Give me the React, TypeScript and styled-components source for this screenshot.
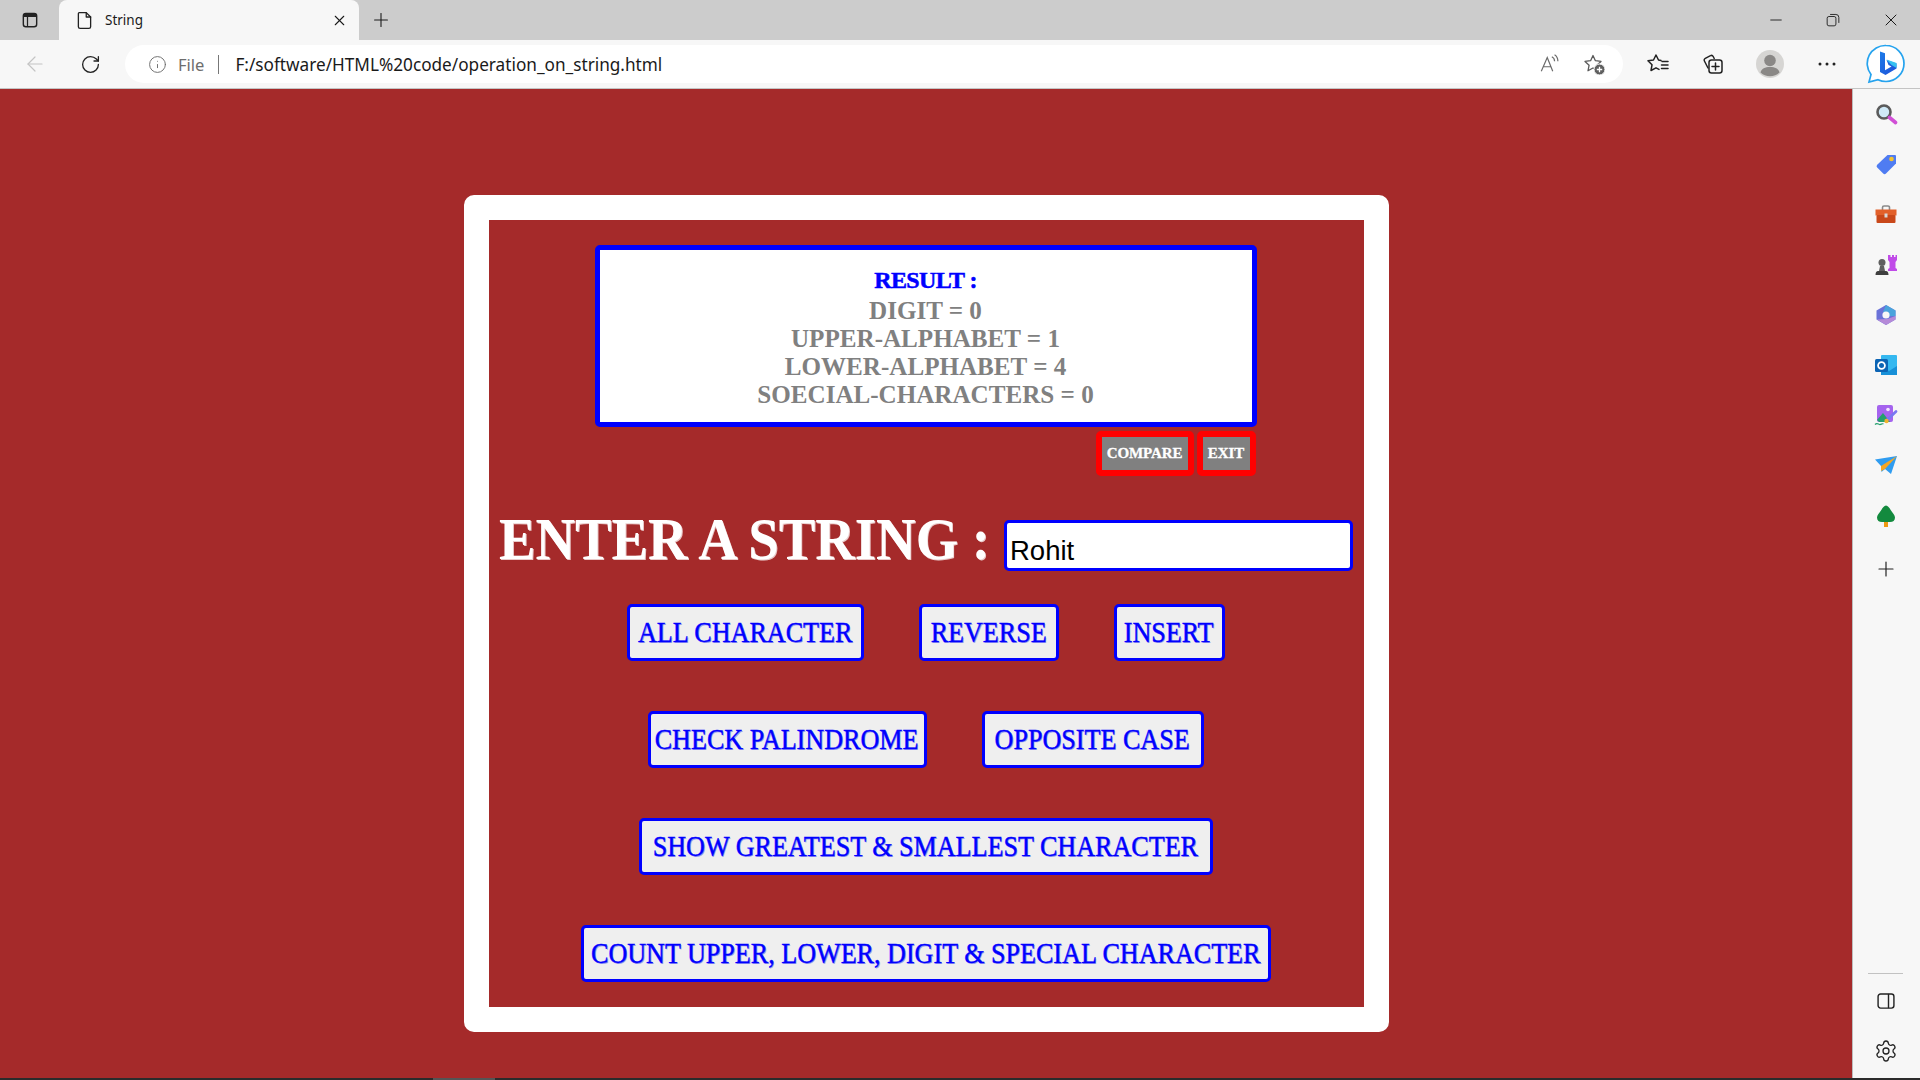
import React from "react";
import styled, { createGlobalStyle } from "styled-components";
import { ArrowLeft, Info, Minus, Plus, RotateCw, Settings, X } from "lucide-react";

const GlobalStyle = createGlobalStyle`
  html, body { margin: 0; padding: 0; overflow: hidden; }
  body { font-family: "Noto Sans", "Liberation Sans", sans-serif; }
`;

const Window = styled.div`
  width: 1920px;
  height: 1080px;
  display: flex;
  flex-direction: column;
  background: #a52a2a;
`;

/* browser chrome */
const TabStrip = styled.div`
  height: 40px;
  flex: none;
  background: #cccccc;
  display: flex;
  align-items: center;
  color: #1a1a1a;
`;
const SideToggle = styled.div`
  width: 59px;
  flex: none;
  display: flex;
  justify-content: center;
  svg { margin-left: 1px; }
`;
const Tab = styled.div`
  width: 300px;
  height: 40px;
  flex: none;
  box-sizing: border-box;
  background: #f7f7f7;
  border-radius: 8px 8px 0 0;
  display: flex;
  align-items: center;
  padding: 0 11px 0 15px;
  font-size: 13.5px;
`;
const TabTitle = styled.span`
  margin-left: 10px;
  flex: 1;
`;
const NewTab = styled.div`
  width: 44px;
  flex: none;
  display: flex;
  justify-content: center;
`;
const WindowControls = styled.div`
  margin-left: auto;
  display: flex;
  align-items: center;
  gap: 41px;
  padding-right: 19px;
  svg { display: block; }
`;
const Toolbar = styled.div`
  height: 48px;
  flex: none;
  background: #f7f7f7;
  border-bottom: 1px solid #c4c4c4;
  display: flex;
  align-items: center;
`;
const NavButton = styled.div<{ $width: number }>`
  width: ${(p) => p.$width}px;
  flex: none;
  display: flex;
  justify-content: center;
`;
const AddressBar = styled.div`
  width: 1498px;
  height: 38px;
  margin-left: 14px;
  box-sizing: border-box;
  flex: none;
  background: #ffffff;
  border-radius: 19px;
  display: flex;
  align-items: center;
  padding: 0 23px 0 23px;
  color: #1a1a1a;
`;
const Scheme = styled.span`
  color: #6d6d6d;
  font-size: 16.5px;
  margin-left: 11px;
`;
const Separator = styled.span`
  width: 1px;
  height: 19px;
  background: #777777;
  margin: 0 16px 0 14px;
`;
const Url = styled.span`
  font-size: 17.2px;
  flex: 1;
  white-space: nowrap;
`;
const BarIcons = styled.div`
  display: flex;
  align-items: center;
  gap: 21px;
  margin-right: -6px;
`;
const ToolIcons = styled.div`
  flex: 1;
  display: flex;
  align-items: center;
  padding-left: 23px;
  svg { display: block; flex: none; }
`;
const ToolSlot = styled.div<{ $width: number }>`
  width: ${(p) => p.$width}px;
  flex: none;
  display: flex;
  justify-content: center;
`;

const Body = styled.div`
  flex: 1;
  min-height: 0;
  display: flex;
`;
const Page = styled.div`
  flex: 1;
  min-width: 0;
  background: #a52a2a;
  padding: 106px 0 0 1px;
  display: flex;
  justify-content: center;
  align-items: flex-start;
`;
const SidePanel = styled.div`
  width: 68px;
  flex: none;
  box-sizing: border-box;
  background: #f7f7f7;
  border-left: 1px solid #bdbdbd;
  padding-right: 2px;
  display: flex;
  flex-direction: column;
  align-items: center;
  padding-top: 13px;
  svg { display: block; }
`;
const SideIcons = styled.div`
  display: flex;
  flex-direction: column;
  align-items: center;
  gap: 26.2px;
`;
const SideAdd = styled.div`
  margin-top: 3px;
`;
const SideFoot = styled.div`
  margin-top: auto;
  padding-bottom: 15px;
  display: flex;
  flex-direction: column;
  align-items: center;
  gap: 28px;
`;
const SideRule = styled.div`
  width: 35px;
  height: 1px;
  background: #c2c2c2;
  margin-bottom: -11px;
`;
const Taskbar = styled.div`
  height: 2px;
  flex: none;
  background: #2b2b2b;
  padding-left: 433px;
`;
const TaskbarItem = styled.div`
  width: 62px;
  height: 2px;
  background: #555555;
`;

/* page content */
const Card = styled.div`
  width: 925px;
  height: 837px;
  box-sizing: border-box;
  border: 25px solid #ffffff;
  border-radius: 10px;
  background: #a52a2a;
  padding: 25px 2px 0 0;
  display: flex;
  flex-direction: column;
  align-items: center;
`;
const ResultBox = styled.div`
  width: 662px;
  height: 182px;
  flex: none;
  box-sizing: border-box;
  border: 5.5px solid #0000ff;
  border-radius: 5px;
  background: #ffffff;
  padding-top: 16px;
  text-align: center;
  font-family: "Liberation Serif", "Times New Roman", serif;
  font-weight: 700;
  font-size: 25.1px;
  line-height: 28px;
  color: #808080;
`;
const ResultTitle = styled.div`
  color: #0000ff;
  font-size: 24px;
  line-height: 28px;
  margin-bottom: 3px;
  letter-spacing: -0.6px;
  -webkit-text-stroke: 0.5px #0000ff;
`;
const SmallRow = styled.div`
  width: 662px;
  flex: none;
  display: flex;
  justify-content: flex-end;
  gap: 3px;
  margin-top: 4px;
  padding-right: 1px;
  box-sizing: border-box;
`;
const SmallButton = styled.button<{ $width: number }>`
  width: ${(p) => p.$width}px;
  height: 45px;
  box-sizing: border-box;
  padding: 0;
  border: 6px solid #ff0000;
  border-radius: 5px;
  background: #808080;
  color: #ffffff;
  font-family: "Liberation Serif", serif;
  font-weight: 700;
  font-size: 15px;
  letter-spacing: -0.1px;
  -webkit-text-stroke: 0.3px #ffffff;
`;
const InputRow = styled.div`
  width: 100%;
  height: 51px;
  flex: none;
  box-sizing: border-box;
  margin-top: 44px;
  padding-left: 10px;
  display: flex;
  align-items: center;
`;
const Heading = styled.label`
  width: 505px;
  flex: none;
  margin-top: -12px;
  font-family: "Liberation Serif", serif;
  font-weight: 700;
  font-size: 60px;
  line-height: 51px;
  color: #ffffff;
  white-space: nowrap;
  text-shadow: 1px 1px 0 #e9c9c9;
  span {
    display: inline-block;
    transform: scaleX(0.912);
    transform-origin: left center;
  }
`;
const StringInput = styled.input`
  width: 349px;
  height: 51px;
  box-sizing: border-box;
  border: 3px solid #0000ff;
  border-radius: 5px;
  background: #ffffff;
  padding: 11px 0 0 3px;
  font-family: "Liberation Sans", Arial, sans-serif;
  font-size: 27.5px;
  color: #000000;
  outline: none;
`;
const ButtonRow = styled.div<{ $first?: boolean }>`
  height: 57px;
  flex: none;
  display: flex;
  justify-content: center;
  gap: 55px;
  margin-top: ${(p) => (p.$first ? 33 : 50)}px;
`;
const ActionButton = styled.button<{ $width: number }>`
  width: ${(p) => p.$width}px;
  height: 57px;
  box-sizing: border-box;
  padding: 0 0 2px;
  border: 3px solid #0000ff;
  border-radius: 5px;
  background: #efefef;
  color: #0000ff;
  font-family: "Liberation Serif", serif;
  font-weight: 400;
  font-size: 30px;
  display: flex;
  align-items: center;
  justify-content: center;
  white-space: nowrap;
  span {
    display: inline-block;
    transform: scaleX(0.87);
    text-shadow: 1px 1px 0 #9a9af0;
    -webkit-text-stroke: 0.4px #0000ff;
  }
`;

/* icons */
const Glyph: React.FC<{ size?: number; children: React.ReactNode }> = ({ size = 24, children }) => (
  <svg width={size} height={size} viewBox="0 0 24 24" fill="none">
    {children}
  </svg>
);

const Stroke = { stroke: "#222222", strokeWidth: 1.5, strokeLinejoin: "round" as const, strokeLinecap: "round" as const };
const StarPath = "M11 3.5l2.4 5.2 5.6.7-4.1 3.8 1.1 5.6L11 16l-5 2.8 1.1-5.6L3 9.4l5.6-.7z";

const SidebarToggleIcon = () => (
  <Glyph size={20}>
    <rect x="4" y="4" width="16" height="16" rx="3" stroke="#222" strokeWidth="1.7" />
    <path d="M4 8.5V7a3 3 0 0 1 3-3h10a3 3 0 0 1 3 3v1.5z" fill="#222" />
    <path d="M9 8v12" stroke="#222" strokeWidth="1.5" />
  </Glyph>
);
const DocIcon = () => (
  <Glyph size={21}>
    <path d="M6 3h8l5 5v11a2 2 0 0 1-2 2H7a2 2 0 0 1-2-2V4a1 1 0 0 1 1-1z" {...Stroke} />
    <path d="M14 3v5h5" {...Stroke} />
  </Glyph>
);
const RestoreIcon = () => (
  <Glyph size={14}>
    <rect x="2" y="6" width="15" height="16" rx="3" stroke="#222" strokeWidth="1.6" />
    <path d="M7 2.5h10a5 5 0 0 1 5 5V17" stroke="#222" strokeWidth="1.6" />
  </Glyph>
);
const ReadAloudIcon = () => (
  <Glyph size={22}>
    <path d="M2.5 20L9 5l6 15M4.8 15h8.5" stroke="#6a6a6a" strokeWidth="1.3" />
    <path d="M14 4c2 1 3 3 3 5M17 2c2.6 1.7 3.6 4 3.6 7" stroke="#6a6a6a" strokeWidth="1.3" />
  </Glyph>
);
const StarAddIcon = () => (
  <Glyph size={24}>
    <path d={StarPath} stroke="#5a5a5a" strokeWidth="1.3" strokeLinejoin="round" />
    <circle cx="17.5" cy="17.5" r="5.5" fill="#5f5f5f" stroke="#fff" />
    <path d="M17.5 14.8v5.4M14.8 17.5h5.4" stroke="#fff" strokeWidth="1.3" />
  </Glyph>
);
const FavoritesIcon = () => (
  <Glyph size={24}>
    <path d="M15 8.600L12.500 8 10 3 7.500 8 2 8.800l4 4-1 5.700 5-2.700 3 1.600" {...Stroke} />
    <path d="M16 9.500h6M15.500 13h6.500M15.500 16.500h6.500" {...Stroke} />
  </Glyph>
);
const CollectionsIcon = () => (
  <Glyph size={24}>
    <path d="M7 16L3.4 9a2 2 0 0 1 .9-2.7l5.2-2.6a2 2 0 0 1 2.7.8l1 2" {...Stroke} />
    <rect x="8" y="8" width="13" height="13" rx="2.5" {...Stroke} />
    <path d="M14.5 11v7M11 14.5h7" {...Stroke} />
  </Glyph>
);
const ProfileIcon = () => (
  <svg width="28" height="28" viewBox="0 0 28 28">
    <circle cx="14" cy="14" r="14" fill="#d6d5d3" />
    <circle cx="14" cy="10.5" r="5.8" fill="#8a8886" />
    <path d="M4.5 22.5c1-4 4.5-5.5 9.500-5.500s8.500 1.500 9.500 5.500a14 14 0 0 1-19 0z" fill="#8a8886" />
  </svg>
);
const DotsIcon = () => (
  <svg width="18" height="4" viewBox="0 0 18 4">
    <circle cx="2" cy="2" r="1.500" fill="#222" />
    <circle cx="9" cy="2" r="1.500" fill="#222" />
    <circle cx="16" cy="2" r="1.500" fill="#222" />
  </svg>
);
const BingIcon = () => (
  <svg width="40" height="40" viewBox="0 0 40 40">
    <defs>
      <linearGradient id="bingB" x1="0" y1="0" x2="1" y2="1">
        <stop offset="0" stopColor="#1b7be8" />
        <stop offset="1" stopColor="#1f4fd8" />
      </linearGradient>
    </defs>
    <path d="M20 1.500a18 18 0 0 1 0 36c-3 0-5.500-.6-8-1.800L3 38l2-7.500A18 18 0 0 1 20 1.500z" fill="#fff" stroke="#26a3ee" strokeWidth="1.700" />
    <path d="M14 7.500l5 1.800v17l6.500-3.700-3-1.500-2-5 10 3.500v5L19.500 31 14 28z" fill="url(#bingB)" />
    <path d="M20.500 15.500l10 3.500v5l-5-3z" fill="#35c1f1" />
  </svg>
);

const SearchApp = () => (
  <Glyph>
    <circle cx="10" cy="10" r="6.500" fill="#cfe9f7" stroke="#5b5b5b" strokeWidth="2.600" />
    <path d="M15.500 15.500l6 5" stroke="#d14fd6" strokeWidth="3.600" strokeLinecap="round" />
  </Glyph>
);
const TagApp = () => (
  <Glyph>
    <path d="M13.500 3H21a1 1 0 0 1 1 1v7.500L12 21.500a2 2 0 0 1-2.800 0l-6-6a2 2 0 0 1 0-2.800z" fill="#4f7cf2" />
    <circle cx="17.500" cy="7" r="2.300" fill="#f4c430" />
  </Glyph>
);
const ToolboxApp = () => (
  <Glyph>
    <path d="M8.500 8V5.500a1.500 1.500 0 0 1 1.500-1.500h4a1.500 1.500 0 0 1 1.500 1.500V8" stroke="#8a8a8a" strokeWidth="1.600" />
    <rect x="1.500" y="7.500" width="21" height="6" fill="#e2602a" />
    <rect x="2.500" y="13" width="19" height="8" rx="1" fill="#c9481a" />
    <rect x="10.500" y="11.500" width="3" height="4" fill="#d8d8d8" />
  </Glyph>
);
const ChessApp = () => (
  <Glyph>
    <path d="M14.500 2h2v2h1.500V2h2v2h1.500V2H23v5l-1.500 2v6l1.500 1v2h-9v-2l1.500-1V9L14 7V2z" fill="#c04be8" />
    <circle cx="8" cy="9.500" r="3.500" fill="#5f5f5f" />
    <path d="M6 13h4l1 5H5z" fill="#5f5f5f" />
    <path d="M1.500 22c0-2.500 1-4 2.500-4h8c1.500 0 2.500 1.500 2.500 4z" fill="#3f3f3f" />
  </Glyph>
);
const OfficeApp = () => (
  <Glyph>
    <path d="M12 2l9.500 5.500v9L12 22l-9.500-5.500v-9z" fill="#6a72d8" />
    <path d="M12 2l9.500 5.500v5.500H14l-5-4z" fill="#4aa3dc" />
    <path d="M3 16.500L12 22l9.500-5.500V13l-8 3z" fill="#b58ad8" />
    <circle cx="12" cy="12" r="3.600" fill="#f7f7f7" />
  </Glyph>
);
const OutlookApp = () => (
  <Glyph>
    <rect x="7" y="2" width="16" height="20" rx="1" fill="#35b8f0" />
    <path d="M7 13l8 5 8-5v9H7z" fill="#1790d8" />
    <rect x="1" y="6" width="13" height="13" rx="1.500" fill="#0c64b4" />
    <circle cx="7.500" cy="12.500" r="3.400" fill="none" stroke="#fff" strokeWidth="1.800" />
  </Glyph>
);
const DesignerApp = () => (
  <Glyph>
    <rect x="3" y="2" width="16" height="17" rx="2" fill="#a564ee" />
    <path d="M3 17l6-7 7 9H5z" fill="#24a06d" />
    <circle cx="14" cy="6.500" r="1.800" fill="#f3e5ff" />
    <path d="M13 17L22 8.500" stroke="#7a78f2" strokeWidth="2.800" strokeLinecap="round" />
    <circle cx="12.500" cy="18" r="2.200" fill="#f4b32e" />
    <path d="M1 21.500c2-2 3-.5 4.500 0s2.500-1.500 4-.5" stroke="#24a06d" strokeWidth="1.200" />
  </Glyph>
);
const SendApp = () => (
  <Glyph>
    <path d="M1 6.500L23 3l-6 18-6-5-3.500 3-.5-6z" fill="#2f9cf0" />
    <path d="M7 13L23 3l-12 13-4 2z" fill="#f5a623" />
  </Glyph>
);
const TreeApp = () => (
  <Glyph>
    <rect x="10" y="17" width="4" height="6" fill="#ef9a12" />
    <path d="M12 1.500c2 0 3.500 2.500 5 5 1.500 2.500 4 4.500 4 7 0 3-2 4.500-5 4.500H8c-3 0-5-1.500-5-4.500 0-2.500 2.500-4.500 4-7 1.500-2.500 3-5 5-5z" fill="#138a3e" />
  </Glyph>
);
const PanelIcon = () => (
  <Glyph size={20}>
    <rect x="2.500" y="3.500" width="19" height="17" rx="3" stroke="#222" strokeWidth="1.700" />
    <path d="M15 3.500v17" stroke="#222" strokeWidth="1.700" />
  </Glyph>
);

const smallButtons = [
  { label: "COMPARE", width: 98 },
  { label: "EXIT", width: 59 },
];

const rows = [
  [
    { label: "ALL CHARACTER", width: 237 },
    { label: "REVERSE", width: 140 },
    { label: "INSERT", width: 111 },
  ],
  [
    { label: "CHECK PALINDROME", width: 279 },
    { label: "OPPOSITE CASE", width: 222 },
  ],
  [{ label: "SHOW GREATEST & SMALLEST CHARACTER", width: 574 }],
  [{ label: "COUNT UPPER, LOWER, DIGIT & SPECIAL CHARACTER", width: 690 }],
];

const App: React.FC = () => {
  return (
    <Window>
      <GlobalStyle />
      <TabStrip>
        <SideToggle>
          <SidebarToggleIcon />
        </SideToggle>
        <Tab>
          <DocIcon />
          <TabTitle>String</TabTitle>
          <X size={17} strokeWidth={1.5} />
        </Tab>
        <NewTab>
          <Plus size={22} strokeWidth={1.2} />
        </NewTab>
        <WindowControls>
          <Minus size={18} strokeWidth={1.2} />
          <RestoreIcon />
          <X size={20} strokeWidth={1.2} />
        </WindowControls>
      </TabStrip>
      <Toolbar>
        <NavButton $width={70}>
          <ArrowLeft size={24} strokeWidth={1.2} color="#c4c4c4" />
        </NavButton>
        <NavButton $width={41}>
          <RotateCw size={21} strokeWidth={1.5} color="#222222" />
        </NavButton>
        <AddressBar>
          <Info size={19} strokeWidth={1.2} color="#6d6d6d" />
          <Scheme>File</Scheme>
          <Separator />
          <Url>F:/software/HTML%20code/operation_on_string.html</Url>
          <BarIcons>
            <ReadAloudIcon />
            <StarAddIcon />
          </BarIcons>
        </AddressBar>
        <ToolIcons>
          <ToolSlot $width={24}><FavoritesIcon /></ToolSlot>
          <ToolSlot $width={86}><CollectionsIcon /></ToolSlot>
          <ToolSlot $width={28}><ProfileIcon /></ToolSlot>
          <ToolSlot $width={86}><DotsIcon /></ToolSlot>
          <ToolSlot $width={31}><BingIcon /></ToolSlot>
        </ToolIcons>
      </Toolbar>
      <Body>
        <Page>
          <Card>
            <ResultBox>
              <ResultTitle>RESULT :</ResultTitle>
              <div>DIGIT = 0</div>
              <div>UPPER-ALPHABET = 1</div>
              <div>LOWER-ALPHABET = 4</div>
              <div>SOECIAL-CHARACTERS = 0</div>
            </ResultBox>
            <SmallRow>
              {smallButtons.map((b) => (
                <SmallButton key={b.label} $width={b.width}>{b.label}</SmallButton>
              ))}
            </SmallRow>
            <InputRow>
              <Heading><span>ENTER A STRING :</span></Heading>
              <StringInput defaultValue="Rohit" />
            </InputRow>
            {rows.map((row, i) => (
              <ButtonRow key={i} $first={i === 0}>
                {row.map((b) => (
                  <ActionButton key={b.label} $width={b.width}><span>{b.label}</span></ActionButton>
                ))}
              </ButtonRow>
            ))}
          </Card>
        </Page>
        <SidePanel>
          <SideIcons>
            <SearchApp />
            <TagApp />
            <ToolboxApp />
            <ChessApp />
            <OfficeApp />
            <OutlookApp />
            <DesignerApp />
            <SendApp />
            <TreeApp />
            <SideAdd>
              <Plus size={24} strokeWidth={1.2} color="#222" />
            </SideAdd>
          </SideIcons>
          <SideFoot>
            <SideRule />
            <PanelIcon />
            <Settings size={24} strokeWidth={1.3} color="#222" />
          </SideFoot>
        </SidePanel>
      </Body>
      <Taskbar>
        <TaskbarItem />
      </Taskbar>
    </Window>
  );
};

export default App;
